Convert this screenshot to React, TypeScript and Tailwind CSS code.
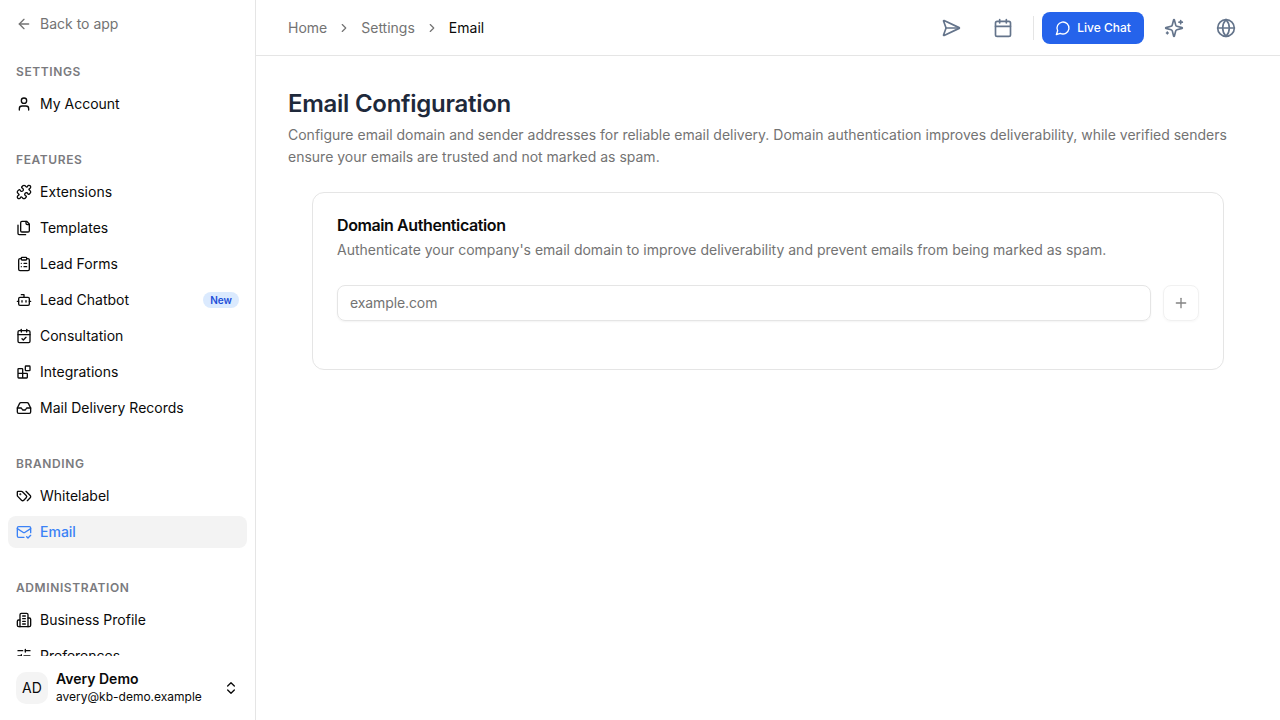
import {
  ArrowLeft,
  Bot,
  Calendar,
  CalendarCheck,
  ChevronRight,
  ChevronsUpDown,
  ClipboardList,
  Globe,
  Inbox,
  MailCheck,
  Plus,
  SendHorizontal,
  User,
  createLucideIcon,
  type LucideIcon,
} from "lucide-react";
import clsx from "clsx";

const Puzzle = createLucideIcon("PuzzlePiece", [
  [
    "path",
    {
      d: "M19.439 7.85c-.049.322.059.648.289.878l1.568 1.568c.47.47.706 1.087.706 1.704s-.235 1.233-.706 1.704l-1.611 1.611a.98.98 0 0 1-.837.276c-.47-.07-.802-.48-.968-.925a2.501 2.501 0 1 0-3.214 3.214c.446.166.855.497.925.968a.979.979 0 0 1-.276.837l-1.61 1.61a2.404 2.404 0 0 1-1.705.707 2.402 2.402 0 0 1-1.704-.706l-1.568-1.568a1.026 1.026 0 0 0-.877-.29c-.493.074-.84.504-1.02.968a2.5 2.5 0 1 1-3.237-3.237c.464-.18.894-.527.967-1.02a1.026 1.026 0 0 0-.289-.877l-1.568-1.568A2.402 2.402 0 0 1 1.998 12c0-.617.236-1.234.706-1.704L4.23 8.77c.24-.24.581-.353.917-.303.515.077.877.528 1.073 1.01a2.5 2.5 0 1 0 3.259-3.259c-.482-.196-.933-.558-1.01-1.073-.05-.336.062-.676.303-.917l1.525-1.525A2.402 2.402 0 0 1 12 1.998c.617 0 1.234.236 1.704.706l1.568 1.568c.23.23.556.338.877.29.493-.074.84-.504 1.02-.968a2.5 2.5 0 1 1 3.237 3.237c-.464.18-.894.527-.967 1.02Z",
      key: "a",
    },
  ],
]);

const Files = createLucideIcon("PageStack", [
  ["path", { d: "M20 7h-3a2 2 0 0 1-2-2V2", key: "a" }],
  [
    "path",
    {
      d: "M9 18a2 2 0 0 1-2-2V4a2 2 0 0 1 2-2h7l4 4v10a2 2 0 0 1-2 2Z",
      key: "b",
    },
  ],
  ["path", { d: "M3 7.6v12.8A1.6 1.6 0 0 0 4.6 22h9.8", key: "c" }],
]);

const Blocks = createLucideIcon("BlockGrid", [
  ["rect", { width: "7", height: "7", x: "14", y: "3", rx: "1", key: "a" }],
  [
    "path",
    {
      d: "M10 21V8a1 1 0 0 0-1-1H4a1 1 0 0 0-1 1v12a1 1 0 0 0 1 1h12a1 1 0 0 0 1-1v-5a1 1 0 0 0-1-1H3",
      key: "b",
    },
  ],
]);

const Tags = createLucideIcon("TagPair", [
  ["path", { d: "m15 5 6.3 6.3a2.4 2.4 0 0 1 0 3.4L17 19", key: "a" }],
  [
    "path",
    {
      d: "M9.586 5.586A2 2 0 0 0 8.172 5H3a1 1 0 0 0-1 1v5.172a2 2 0 0 0 .586 1.414L8.29 18.29a2.426 2.426 0 0 0 3.42 0l3.58-3.58a2.426 2.426 0 0 0 0-3.42z",
      key: "b",
    },
  ],
  ["circle", { cx: "6.5", cy: "9.5", r: ".5", fill: "currentColor", key: "c" }],
]);

const Building = createLucideIcon("OfficeBuilding", [
  ["path", { d: "M6 22V4a2 2 0 0 1 2-2h8a2 2 0 0 1 2 2v18Z", key: "a" }],
  ["path", { d: "M6 12H4a2 2 0 0 0-2 2v6a2 2 0 0 0 2 2h2", key: "b" }],
  ["path", { d: "M18 9h2a2 2 0 0 1 2 2v9a2 2 0 0 1-2 2h-2", key: "c" }],
  ["path", { d: "M10 6h4M10 10h4M10 14h4M10 18h4", key: "d" }],
]);

const Sliders = createLucideIcon("SliderRows", [
  ["path", { d: "M21 4h-7M10 4H3M21 12h-9M8 12H3M21 20h-5M12 20H3", key: "a" }],
  ["path", { d: "M14 2v4M8 10v4M16 18v4", key: "b" }],
]);

const ChatBubble = createLucideIcon("ChatBubble", [
  ["path", { d: "M7.9 20A9 9 0 1 0 4 16.1L2 22Z", key: "a" }],
]);

const Sparkles = createLucideIcon("SparkleStar", [
  [
    "path",
    {
      d: "M9.937 15.5A2 2 0 0 0 8.5 14.063l-6.135-1.582a.5.5 0 0 1 0-.962L8.5 9.936A2 2 0 0 0 9.937 8.5l1.582-6.135a.5.5 0 0 1 .963 0L14.063 8.5A2 2 0 0 0 15.5 9.937l6.135 1.581a.5.5 0 0 1 0 .964L15.5 14.063a2 2 0 0 0-1.437 1.437l-1.582 6.135a.5.5 0 0 1-.963 0z",
      key: "a",
    },
  ],
  ["path", { d: "M20 3v4M22 5h-4M4 17v2M5 18H3", key: "b" }],
]);

type NavItem = {
  title: string;
  icon: LucideIcon;
  badge?: string;
  active?: boolean;
};

const groups: { label: string; items: NavItem[] }[] = [
  { label: "Settings", items: [{ title: "My Account", icon: User }] },
  {
    label: "Features",
    items: [
      { title: "Extensions", icon: Puzzle },
      { title: "Templates", icon: Files },
      { title: "Lead Forms", icon: ClipboardList },
      { title: "Lead Chatbot", icon: Bot, badge: "New" },
      { title: "Consultation", icon: CalendarCheck },
      { title: "Integrations", icon: Blocks },
      { title: "Mail Delivery Records", icon: Inbox },
    ],
  },
  {
    label: "Branding",
    items: [
      { title: "Whitelabel", icon: Tags },
      { title: "Email", icon: MailCheck, active: true },
    ],
  },
  {
    label: "Administration",
    items: [
      { title: "Business Profile", icon: Building },
      { title: "Preferences", icon: Sliders },
    ],
  },
];

function Sidebar() {
  return (
    <aside className="flex w-64 shrink-0 flex-col border-r border-[#e5e5e5] text-sm text-[#0a0a0a]">
      <a className="flex h-12 shrink-0 items-center gap-2 px-4 text-[#737373]">
        <ArrowLeft className="size-4" />
        Back to app
      </a>

      <nav className="flex min-h-0 flex-1 flex-col gap-2 overflow-hidden">
        {groups.map((group) => (
          <div key={group.label} className="shrink-0 p-2">
            <h3 className="flex h-8 items-center px-2 text-xs font-semibold uppercase tracking-wider text-[#7a7a7e]">
              {group.label}
            </h3>
            <ul className="flex flex-col gap-1">
              {group.items.map(({ title, icon: Icon, badge, active }) => (
                <li
                  key={title}
                  className={clsx(
                    "flex h-8 items-center gap-2 rounded-lg px-2",
                    active && "bg-[#f3f3f3] font-medium text-[#3b82f6]",
                  )}
                >
                  <Icon className="size-4 shrink-0" />
                  <span>{title}</span>
                  {badge && (
                    <span className="ml-auto rounded-full bg-[#dbeafe] px-[7px] text-[10px] leading-4 font-semibold text-[#1d4ed8]">
                      {badge}
                    </span>
                  )}
                </li>
              ))}
            </ul>
          </div>
        ))}
      </nav>

      <div className="flex h-16 shrink-0 items-center gap-2 px-4">
        <div className="flex size-8 items-center justify-center rounded-[10px] bg-[#f4f4f4]">
          AD
        </div>
        <div className="flex-1">
          <p className="leading-[18px] font-semibold">Avery Demo</p>
          <p className="text-xs leading-[18px]">avery@kb-demo.example</p>
        </div>
        <ChevronsUpDown className="size-4" />
      </div>
    </aside>
  );
}

function Header() {
  return (
    <header className="flex h-14 shrink-0 items-center justify-between border-b border-[#e5e5e5] px-8">
      <nav className="flex items-center gap-2.5 text-sm text-[#737373]">
        <span>Home</span>
        <ChevronRight className="size-3.5" />
        <span>Settings</span>
        <ChevronRight className="size-3.5" />
        <span className="text-[#0a0a0a]">Email</span>
      </nav>

      <div className="flex items-center gap-2 text-[#64748b]">
        <button className="flex h-9 w-11 items-center justify-center">
          <SendHorizontal className="size-5" />
        </button>
        <button className="flex h-9 w-11 items-center justify-center">
          <Calendar className="size-5" />
        </button>
        <div className="h-6 w-px bg-[#e5e5e5]" />
        <button className="flex h-8 w-[102px] items-center justify-center gap-1.5 rounded-lg bg-[#2563eb] text-xs font-medium text-white">
          <ChatBubble className="size-4" />
          Live Chat
        </button>
        <button className="flex h-9 w-11 items-center justify-center">
          <Sparkles className="size-5" />
        </button>
        <button className="flex h-9 w-11 items-center justify-center">
          <Globe className="size-5" />
        </button>
      </div>
    </header>
  );
}

export default function App() {
  return (
    <div className="flex h-screen overflow-hidden bg-white font-['Inter',sans-serif]">
      <Sidebar />
      <div className="flex min-w-0 flex-1 flex-col">
        <Header />
        <main className="px-8 pt-8">
          <h1 className="text-2xl font-semibold tracking-[-0.27px] text-[#1e293b]">
            Email Configuration
          </h1>
          <p className="mt-1 text-sm leading-[22px] text-[#737373]">
            Configure email domain and sender addresses for reliable email
            delivery. Domain authentication improves deliverability, while
            verified senders ensure your emails are trusted and not marked as
            spam.
          </p>

          <section className="mx-6 mt-6 h-[178px] rounded-xl border border-[#e5e5e5] p-6">
            <h2 className="leading-4 font-semibold tracking-tight text-[#0a0a0a]">
              Domain Authentication
            </h2>
            <p className="mt-[7px] text-sm text-[#737373]">
              Authenticate your company's email domain to improve deliverability
              and prevent emails from being marked as spam.
            </p>
            <div className="mt-[25px] flex gap-3">
              <input
                className="h-9 min-w-0 flex-1 rounded-lg border border-[#e5e5e5] px-3 pb-0.5 text-sm tracking-[-0.1px] shadow-xs placeholder:text-[#737373]"
                placeholder="example.com"
              />
              <button
                className="flex size-9 items-center justify-center rounded-lg border border-[#e5e5e5] text-[#0a0a0a] opacity-50 shadow-xs"
                disabled
              >
                <Plus className="size-4" />
              </button>
            </div>
          </section>
        </main>
      </div>
    </div>
  );
}
